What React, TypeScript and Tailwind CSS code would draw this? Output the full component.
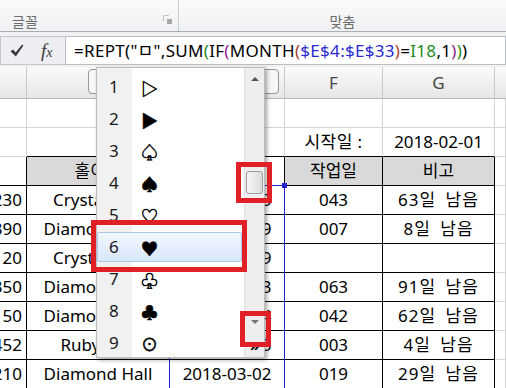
import React from 'react';

const GR = 'border-r-[#d4d4d4]';
const GB = 'border-b-[#d4d4d4]';
const KR = 'border-r-black';
const KB = 'border-b-black';

type Row = { a: string; b: string; c: string; f: string; g: string };

const rows: Row[] = [
  { a: '1,230', b: 'Crystal Hall', c: '2018-04-05', f: '043', g: '63일 남음' },
  { a: '2,390', b: 'Diamond Hall', c: '2018-02-09', f: '007', g: '8일 남음' },
  { a: '1,120', b: 'Crystal Hall', c: '2018-03-09', f: '', g: '' },
  { a: '3,350', b: 'Diamond Hall', c: '2018-05-03', f: '063', g: '91일 남음' },
  { a: '2,150', b: 'Diamond Hall', c: '2018-04-04', f: '042', g: '62일 남음' },
  { a: '1,452', b: 'Ruby Hall', c: '2018-02-05', f: '003', g: '4일 남음' },
  { a: '2,210', b: 'Diamond Hall', c: '2018-03-02', f: '019', g: '29일 남음' },
];

const symbols = ['▷', '▶', '♤', '♠', '♡', '♥', '♧', '♣', '⊙'];

function Cell({
  w,
  r,
  b,
  className = '',
  children,
}: {
  w: string;
  r: string;
  b: string;
  className?: string;
  children?: React.ReactNode;
}) {
  return (
    <div className={`${w} h-full shrink-0 border-r border-b ${r} ${b} flex items-center justify-center whitespace-nowrap overflow-hidden ${className}`}>
      {children}
    </div>
  );
}

function Ribbon() {
  return (
    <div className="h-[32px] flex border-b border-[#a9aeb5] bg-[linear-gradient(#fafbfc,#eef0f2)]">
      <div className="w-[179px] border-r border-[#c8ccd1] flex items-center justify-between pl-[12px] pr-[4px] pt-[12px]">
        <span className="text-[14px] text-[#6b6b6b]">글꼴</span>
        <svg width="10" height="10" viewBox="0 0 10 10" className="mb-[4px] mr-[1px]">
          <path d="M0.5 0.5 H6 M0.5 0.5 V6" stroke="#c4c4c4" fill="none" />
          <rect x="4" y="4" width="5" height="5" fill="#a8a8a8" />
        </svg>
      </div>
      <div className="flex-1 flex items-center justify-center pt-[12px]">
        <span className="text-[14px] text-[#6b6b6b]">맞춤</span>
      </div>
    </div>
  );
}

function FormulaBar() {
  return (
    <div className="h-[35px] flex pt-[4px] pb-[2px] bg-[#eff1f3]">
      <div className="w-[65px] flex items-center border-y border-l border-[#c3c7cd] bg-[#eceef1]">
        <svg width="14" height="13" viewBox="0 0 14 13" className="ml-[9px]">
          <path d="M0.5 7.2 L3.2 5.6 L5.6 8.6 L12.2 0.6 L13.4 1.6 L5.8 12.4 Z" fill="#3a3a3a" />
        </svg>
        <span className="ml-[17px] font-['Liberation_Serif',serif] italic text-[#3a3a3a] leading-none">
          <span className="text-[19px]">f</span>
          <span className="text-[14px]">x</span>
        </span>
      </div>
      <div className="flex-1 flex items-center bg-white border border-[#b9bec6] pl-[8px] text-[17px] tracking-[0.3px] whitespace-nowrap overflow-hidden">
        <span>=REPT("ㅁ",SUM</span>
        <span className="text-[#1f8a1f]">(</span>
        <span>IF</span>
        <span className="text-[#8e1e8e]">(</span>
        <span>MONTH</span>
        <span className="text-[#a8432e]">(</span>
        <span className="text-[#2a2ad0]">$E$4:$E$33</span>
        <span className="text-[#a8432e]">)</span>
        <span>=</span>
        <span className="text-[#1f8a1f]">I18</span>
        <span>,1</span>
        <span className="text-[#8e1e8e]">)</span>
        <span className="text-[#1f8a1f]">)</span>
        <span>)</span>
      </div>
    </div>
  );
}

function ColumnHeaders() {
  const h = 'h-full border-r border-[#c9c9c9] flex items-center justify-center';
  return (
    <div className="h-[32px] flex border-b border-[#b7b7b7] bg-[linear-gradient(#fafafa,#e6e6e6)] text-[17px] text-[#444]">
      <div className={`w-[27px] ${h}`} />
      <div className={`w-[143px] ${h}`}>D</div>
      <div className={`w-[115px] ${h}`}>E</div>
      <div className={`w-[98px] ${h}`}>F</div>
      <div className={`w-[112px] ${h}`}>G</div>
      <div className="flex-1" />
    </div>
  );
}

function Sheet() {
  return (
    <div className="flex flex-col text-[17px] text-black">
      <div className="h-[29px] flex">
        <Cell w="w-[27px]" r={GR} b={GB} />
        <Cell w="w-[143px]" r={GR} b={GB} />
        <Cell w="w-[115px]" r={GR} b={GB} />
        <Cell w="w-[98px]" r={GR} b={GB} />
        <Cell w="w-[112px]" r={GR} b={GB} />
        <Cell w="flex-1" r={GR} b={GB} />
      </div>
      <div className="h-[29px] flex">
        <Cell w="w-[27px]" r={GR} b={GB} />
        <Cell w="w-[143px]" r={GR} b={KB} />
        <Cell w="w-[115px]" r={GR} b={KB} />
        <Cell w="w-[98px]" r={GR} b={KB} className="tracking-[0.4px]">시작일 :</Cell>
        <Cell w="w-[112px]" r={GR} b={KB}>2018-02-01</Cell>
        <Cell w="flex-1" r={GR} b={GB} />
      </div>
      <div className="h-[29px] flex">
        <Cell w="w-[27px]" r={KR} b={KB} />
        <Cell w="w-[143px]" r={KR} b={KB} className="bg-[#d9d9d9]">홀이름</Cell>
        <Cell w="w-[115px]" r={KR} b={KB}>예약일</Cell>
        <Cell w="w-[98px]" r={KR} b={KB} className="bg-[#d9d9d9]">작업일</Cell>
        <Cell w="w-[112px]" r={KR} b={KB} className="bg-[#d9d9d9]">비고</Cell>
        <Cell w="flex-1" r={GR} b={GB} />
      </div>
      {rows.map((row, i) => (
        <div key={i} className="h-[29px] flex">
          <Cell w="w-[27px]" r={KR} b={KB} className="!justify-end pr-[4px]">{row.a}</Cell>
          <Cell w="w-[143px]" r={KR} b={KB}>{row.b}</Cell>
          <Cell w="w-[115px]" r={KR} b={KB}>{row.c}</Cell>
          <Cell w="w-[98px]" r={KR} b={KB}>{row.f}</Cell>
          <Cell w="w-[112px]" r={KR} b={KB} className="tracking-[1px] [word-spacing:4px]">{row.g}</Cell>
          <Cell w="flex-1" r={GR} b={GB} />
        </div>
      ))}
    </div>
  );
}

function SymbolList() {
  return (
    <div className="absolute left-[96px] top-[67px] w-[169px] h-[291px] flex bg-white border border-[#bdbdbd] shadow-[2px_2px_4px_rgba(0,0,0,0.35)]">
      <div className="flex-1 pt-[3px] bg-[linear-gradient(to_right,#f1f1f1_35px,#ffffff_35px)]">
        {symbols.map((s, i) => (
          <div key={i} className="h-[32px] py-[1px] pr-[2px]">
            <div
              className={`h-[30px] flex items-center rounded-[2px] border ${
                i === 5
                  ? 'border-[#a9c7eb] bg-[linear-gradient(#f1f7fe,#d8e7fa)]'
                  : 'border-transparent'
              }`}
            >
              <span className="w-[43px] pl-[11px] text-[17px] text-[#1a1a1a]">{i + 1}</span>
              <span className="text-[17px] font-['Noto_Sans_CJK_KR',sans-serif] text-black leading-none [-webkit-text-stroke:0.5px_black]">{s}</span>
            </div>
          </div>
        ))}
      </div>
      <div className="w-[20px] flex flex-col bg-[#eeeeee] border-l border-[#e2e2e2]">
        <div className="h-[22px] flex items-center justify-center">
          <div className="w-0 h-0 border-l-[4px] border-r-[4px] border-b-[4px] border-l-transparent border-r-transparent border-b-[#555]" />
        </div>
        <div className="flex-1 pt-[81px]">
          <div className="ml-[1px] w-[17px] h-[23px] rounded-[3px] border border-[#9d9d9d] bg-[linear-gradient(to_right,#f7f7f7,#dadada)]" />
        </div>
        <div className="h-[22px] flex items-center justify-center">
          <div className="w-0 h-0 border-l-[4px] border-r-[4px] border-t-[4px] border-l-transparent border-r-transparent border-t-[#777]" />
        </div>
        <div className="h-[24px] flex items-center justify-center text-[15px] font-bold leading-none text-black">»</div>
      </div>
    </div>
  );
}

export default function App() {
  return (
    <div className="relative w-[506px] h-[388px] overflow-hidden bg-white font-['Noto_Sans','Noto_Sans_CJK_KR',sans-serif]">
      <Ribbon />
      <FormulaBar />
      <ColumnHeaders />
      <Sheet />

      {/* function screen tip under the formula bar */}
      <div className="absolute left-[88px] top-[69px] w-[191px] h-[25px] rounded-[4px] border border-[#979797] bg-[#f7f7f7]" />

      {/* selected range */}
      <div className="absolute left-[169px] top-[185px] w-[116px] h-[220px] border border-[#2323c9]" />
      <div className="absolute left-[282px] top-[183px] w-[5px] h-[5px] bg-[#2323c9]" />

      <SymbolList />

      {/* red callouts */}
      <div className="absolute left-[91px] top-[220px] w-[156px] h-[52px] border-[5px] border-[#e11f27]" />
      <div className="absolute left-[236px] top-[162px] w-[36px] h-[41px] border-[5px] border-[#e11f27]" />
      <div className="absolute left-[240px] top-[311px] w-[31px] h-[36px] border-[5px] border-[#e11f27]" />
    </div>
  );
}
